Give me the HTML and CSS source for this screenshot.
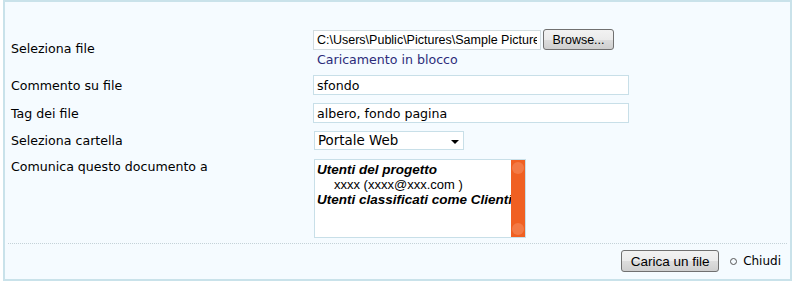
FILE: index.html
```html
<!DOCTYPE html>
<html lang="it">
<head>
    <meta charset="UTF-8">
    <title>Carica un file</title>
    <link rel="stylesheet" href="styles.css">
</head>
<body>

    <div class="pannello">
        <table class="modulo">
            <tr>
                <td class="etichetta">Seleziona file</td>
                <td>
                    <div class="scelta-file">
                        <input type="text" class="percorso" value="C:\Users\Public\Pictures\Sample Pictures\Tree.jpg" readonly>
                        <button class="btn btn-browse">Browse...</button>
                    </div>
                    <a href="#" class="link-blocco">Caricamento in blocco</a>
                </td>
            </tr>
            <tr>
                <td class="etichetta">Commento su file</td>
                <td><input type="text" class="campo" value="sfondo"></td>
            </tr>
            <tr>
                <td class="etichetta">Tag dei file</td>
                <td><input type="text" class="campo" value="albero, fondo pagina"></td>
            </tr>
            <tr>
                <td class="etichetta">Seleziona cartella</td>
                <td>
                    <div class="tendina">
                        <span>Portale Web</span>
                        <span class="freccia"></span>
                    </div>
                </td>
            </tr>
            <tr class="riga-utenti">
                <td class="etichetta">Comunica questo documento a</td>
                <td>
                    <div class="lista-utenti">
                        <div class="voci">
                            <div class="gruppo">Utenti del progetto</div>
                            <div class="utente">xxxx (xxxx@xxx.com )</div>
                            <div class="gruppo">Utenti classificati come Clienti</div>
                        </div>
                        <div class="barra">
                            <span class="pallino"></span>
                            <span class="pallino"></span>
                        </div>
                    </div>
                </td>
            </tr>
        </table>

        <div class="piede">
            <button class="btn btn-carica">Carica un file</button>
            <a href="#" class="chiudi"><span class="cerchio"></span>Chiudi</a>
        </div>
    </div>

</body>
</html>
```

FILE: styles.css
```css
body {
    margin: 0;
    font-family: "DejaVu Sans", Verdana, sans-serif;
    font-size: 12.6px;
    color: #000;
    background: #fff;
}

.pannello {
    margin: 0 3px;
    width: 785px;
    border: 2px solid #c9e2ea;
    background-color: #f5fbff;
    padding-top: 23px;
}

.modulo {
    border-collapse: collapse;
    margin-left: 6px;
}

.modulo td {
    padding: 4px 0;
    vertical-align: middle;
}

.etichetta {
    width: 302px;
}

.riga-utenti td {
    vertical-align: top;
    padding-top: 5px;
}

.scelta-file {
    display: flex;
    align-items: center;
    gap: 2px;
}

.percorso {
    width: 228px;
    height: 20px;
    box-sizing: border-box;
    border: 1px solid #d2dce0;
    padding: 0 3px;
    font-family: "Liberation Sans", Arial, sans-serif;
    font-size: 12.5px;
    color: #000;
    background: #fff;
}

.btn {
    font-family: "Liberation Sans", Arial, sans-serif;
    color: #000;
    border: 1px solid #707070;
    border-radius: 3px;
    background: linear-gradient(#f2f2f2, #ebebeb 50%, #dddddd 51%, #cfcfcf);
    padding: 0;
    cursor: pointer;
}

.btn-browse {
    width: 71px;
    height: 21px;
    font-size: 12.5px;
}

.link-blocco {
    display: block;
    margin: 2px 0 0 4px;
    color: #2c2c7a;
    text-decoration: none;
    line-height: 15px;
}

.campo {
    width: 316px;
    height: 20px;
    box-sizing: border-box;
    border: 1px solid #c8dfe8;
    padding: 0 3px;
    font-family: "DejaVu Sans", Verdana, sans-serif;
    font-size: 12.6px;
    color: #000;
    background: #fff;
}

.tendina {
    width: 150px;
    height: 19px;
    box-sizing: border-box;
    margin-left: 1px;
    border: 1px solid #c8dfe8;
    background: #fff;
    display: flex;
    align-items: center;
    justify-content: space-between;
    padding: 0 4px 0 3px;
    font-size: 13.4px;
}

.freccia {
    width: 0;
    height: 0;
    border-left: 4px solid transparent;
    border-right: 4px solid transparent;
    border-top: 4px solid #000;
    margin-top: 2px;
}

.lista-utenti {
    width: 212px;
    height: 79px;
    box-sizing: border-box;
    margin-left: 1px;
    border: 1px solid #c8dfe8;
    background: #fff;
    display: flex;
}

.voci {
    flex: 1;
    overflow: hidden;
    white-space: nowrap;
    padding: 2px 0 0 2px;
    font-family: "Liberation Sans", Arial, sans-serif;
    font-size: 13.5px;
    line-height: 15px;
}

.gruppo {
    font-weight: bold;
    font-style: italic;
}

.utente {
    padding-left: 17px;
    font-size: 13px;
}

.barra {
    width: 14px;
    background: #f06022;
    display: flex;
    flex-direction: column;
    justify-content: space-between;
    align-items: center;
    padding: 2px 0;
}

.pallino {
    width: 12px;
    height: 12px;
    border-radius: 50%;
    background: #f37a45;
}

.piede {
    margin: 1px 3px 0 3px;
    border-top: 1px dotted #c4d2d8;
    display: flex;
    justify-content: flex-end;
    align-items: center;
    padding: 6px 6px 7px 0;
}

.btn-carica {
    width: 98px;
    height: 22px;
    font-size: 13.5px;
}

.chiudi {
    margin-left: 11px;
    color: #000;
    text-decoration: none;
    font-size: 12px;
    display: flex;
    align-items: center;
}

.cerchio {
    width: 5px;
    height: 5px;
    border: 1px solid #555;
    border-radius: 50%;
    margin-right: 6px;
}
```
